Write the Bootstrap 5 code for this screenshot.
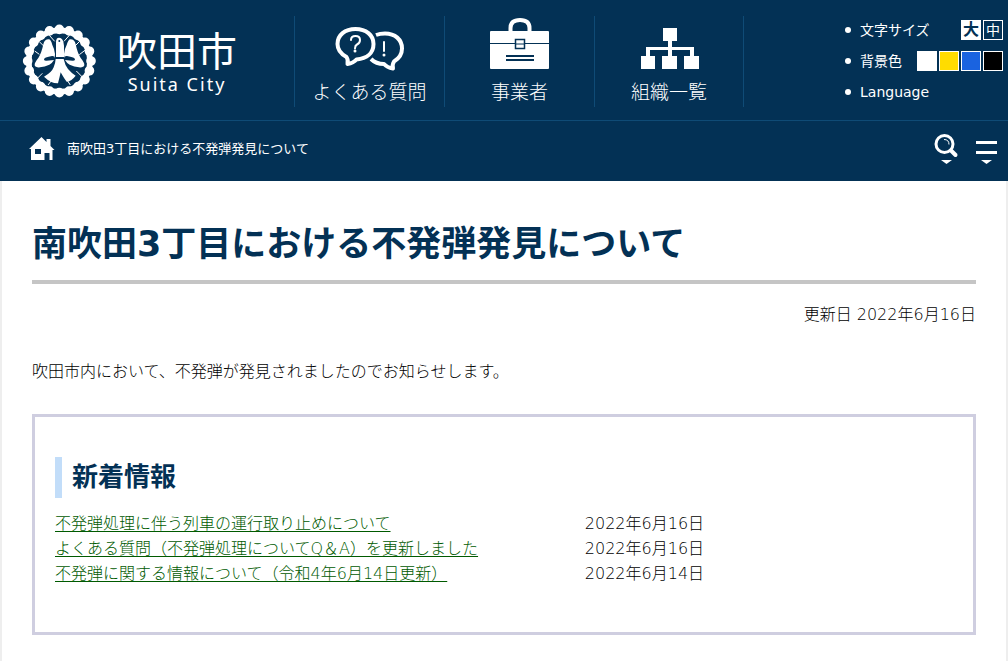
<!DOCTYPE html>
<html lang="ja">
<head>
<meta charset="utf-8">
<meta name="viewport" content="width=device-width, initial-scale=1">
<title>南吹田3丁目における不発弾発見について | 吹田市</title>
<link href="https://cdn.jsdelivr.net/npm/bootstrap@5.3.0/dist/css/bootstrap.min.css" rel="stylesheet">
<style>
  :root { --navy: #033155; --navy-line: #0f4b76; }
  body { font-family: "DejaVu Sans", "Noto Sans CJK JP", sans-serif; font-size: 16px; line-height: 25px; font-weight: 300; color: #000; background: #eee; }
  .site-head { background: var(--navy); color: #fff; font-weight: 400; }
  .site-head a { color: #fff; text-decoration: none; }
  .head-top { min-height: 121px; border-bottom: 1px solid var(--navy-line); }
  .brand { flex: 0 0 294px; padding: 16px 0 0 15px; }
  .brand-ja { font-size: 40px; line-height: 50px; font-family: "Noto Sans CJK JP", sans-serif; }
  .brand-en { font-size: 18px; line-height: 20px; font-family: "Noto Sans", sans-serif; letter-spacing: 2px; }
  .main-nav { padding-top: 16px; }
  .main-nav a { width: 150px; height: 91px; border-left: 1px solid var(--navy-line); font-size: 19px; line-height: 30px; font-weight: 300; }
  .main-nav li:last-child a { border-right: 1px solid var(--navy-line); }
  .tools { width: 163px; padding: 20px 5px 0 0; font-size: 14px; line-height: 20px; }
  .tools li { display: flex; gap: 2px; margin-bottom: 11px; }
  .tools li::before { content: ""; width: 6px; height: 6px; margin: 7px 7px 0 0; border-radius: 50%; background: #fff; }
  .tools button { width: 20px; height: 20px; padding: 0; border: 1px solid #fff; font-size: 14px; line-height: 18px; color: #fff; background: transparent; }
  .tools .size-lg { background: #fff; color: var(--navy); font-weight: 700; font-size: 16px; }
  .tools .bg-w { background: #fff; }
  .tools .bg-y { background: #ffdc00; }
  .tools .bg-b { background: #1a63e0; }
  .tools .bg-k { background: #000; }
  .crumbs { min-height: 60px; padding: 0 11px 5px 29px; font-size: 13px; }
  .icon-btn { border: 0; padding: 0; background: transparent; color: #fff; }
  .page { margin: 0 2px; padding: 38px 30px 27px; background: #fff; }
  h1 { font-size: 35px; line-height: 50px; font-weight: 700; color: var(--navy); padding-bottom: 11px; margin-bottom: 18px; border-bottom: 4px solid #c5c5c5; }
  .updated { margin-bottom: 32px; }
  .intro { margin-bottom: 30px; }
  .news { border: 3px solid #cfcee0; padding: 40px 20px 46px; }
  h2 { font-size: 26px; line-height: 41px; font-weight: 700; color: var(--navy); border-left: 7px solid #c2ddf9; padding-left: 10px; margin-bottom: 13px; }
  .news-table { width: 100%; }
  .news-table td { padding: 0; }
  .news-table td:first-child { width: 59%; }
  .news-table a { color: #005a00; text-underline-offset: 2px; }
</style>
</head>
<body>
<header class="site-head">
  <div class="head-top d-flex flex-wrap">
    <a class="brand d-flex" href="#">
      <svg width="90" height="90" viewBox="0 0 270 270" aria-hidden="true">
        <g fill="none" stroke="#fff">
          <circle cx="133" cy="135" r="95" stroke-width="29" stroke-linecap="round" pathLength="20" stroke-dasharray="0 1"/>
          <circle cx="133" cy="135" r="92" stroke-width="17"/>
          <path stroke-width="3" d="M72 76l16 16M59 105l14 10M194 76l-20 20M211 102l-18 14M99 207l14-18M62 192l20-20M166 207l-12-18M206 187l-22-22M103 58l16 18M163 58l-16 18"/>
        </g>
        <g fill="#fff">
          <path d="M123 78q0-13 9-13t13 12l2 12v34h-24z"/>
          <path d="M101 70q-13 0-16 15-5 25-15 41-12 14-11 22 2 7 16 6 14-1 28-8 9-5 14-14l-22 2q-9 1-8-4 1-6 14-8l10-2q8-1 8 6l1-12q-1-14-8-27Q108 70 101 70z"/>
          <path d="M166 70q13 0 16 15 5 25 15 41 12 14 11 22-2 7-16 6-14-1-28-8-9-5-14-14l22 2q9 1 8-4-1-6-14-8l-10-2q-8-1-8 6l-1-12q1-14 8-27Q160 70 166 70z"/>
          <path d="M122 129h24q4 19 13 30 10 12 23 20-12 16-27 18-7-8-18-28-3 14-8 33-20 1-42-20 23-12 29-28 5-11 6-25z"/>
        </g>
        <circle cx="133" cy="75" r="3" fill="#033155"/>
      </svg>
      <span class="d-flex flex-column align-items-center ms-2 pt-2 ps-1">
        <span class="brand-ja">吹田市</span>
        <span class="brand-en">Suita City</span>
      </span>
    </a>
    <nav class="main-nav" aria-label="メイン">
      <ul class="list-unstyled d-flex mb-0">
        <li><a class="d-flex flex-column align-items-center" href="#">
          <svg width="70" height="61" viewBox="0 0 70 61" fill="none" stroke="#fff" stroke-width="4" stroke-linejoin="round" aria-hidden="true">
            <path d="M20.500 13C10 13 2.500 19 2.500 28c0 6 3.500 10 9 13q2 3 1 7 6-1 9-4.500C32 42.500 38.500 37 38.500 28S31 13 20.500 13z"/>
            <path d="M41 19q4-1.500 9-1.500c10 0 17 6 17 15 0 6-3 10-8 13q-2 3-1 7-6-1-9-4.500-8 0-13-5"/>
            <path stroke-width="2" stroke-linecap="round" d="M16 24q0-4 4.500-4t4.500 4q0 3-3 4.500-2 1-2 4M49 26v9"/>
            <circle cx="20" cy="35" r="1.500" fill="#fff" stroke="none"/><circle cx="49" cy="39" r="1.500" fill="#fff" stroke="none"/>
          </svg>よくある質問</a></li>
        <li><a class="d-flex flex-column align-items-center" href="#">
          <svg width="60" height="61" viewBox="0 0 60 61" fill="none" aria-hidden="true">
            <path stroke="#fff" stroke-width="4" d="M20.500 17v-5q0-8 9.500-8t9.500 8v5"/>
            <rect x="0" y="15" width="59" height="38" rx="1" fill="#fff"/>
            <path stroke="#033155" d="M0 27.500h25M35 27.500h25M25 28h10"/>
            <path stroke="#033155" stroke-width="1.500" d="M25.500 23.500h9v9h-9z"/>
            <path stroke="#033155" stroke-width="2" d="M16 40h28M16 44h28"/>
          </svg>事業者</a></li>
        <li><a class="d-flex flex-column align-items-center" href="#">
          <svg width="60" height="61" viewBox="0 0 60 61" fill="#fff" aria-hidden="true">
            <path d="M24 12h14v13h-5v6h22v9h5v13H45V40h6v-6H33v6h5v13H23V40h6v-6H11v6h5v13H2V40h5v-9h22v-6h-5z"/>
          </svg>組織一覧</a></li>
      </ul>
    </nav>
    <ul class="tools list-unstyled ms-auto mb-0">
      <li>文字サイズ<button class="size-lg ms-auto" type="button">大</button><button type="button">中</button></li>
      <li>背景色<button class="bg-w ms-auto" type="button" aria-label="白"></button><button class="bg-y" type="button" aria-label="黄"></button><button class="bg-b" type="button" aria-label="青"></button><button class="bg-k" type="button" aria-label="黒"></button></li>
      <li><a href="#">Language</a></li>
    </ul>
  </div>
  <div class="crumbs d-flex align-items-center">
    <a href="#" aria-label="ホーム" class="d-flex">
      <svg width="26" height="24" viewBox="0 0 26 24" aria-hidden="true">
        <path fill="#fff" d="M0 12L12.500 0l5 5V2h4v7l4 4h-2v10h-3v-7h-5v7H2V12z"/>
        <path fill="#033155" d="M6 12h6v5H6z"/>
      </svg>
    </a>
    <span class="ms-2 ps-1">南吹田3丁目における不発弾発見について</span>
    <div class="ms-auto d-flex gap-3">
      <button class="icon-btn d-flex" type="button" aria-label="検索">
        <svg width="25" height="30" viewBox="0 0 25 30" fill="none" stroke="#fff" aria-hidden="true">
          <circle cx="10.500" cy="10" r="8.500" stroke-width="3"/><path stroke-width="1" d="M10 5.500q5 0 5 5"/>
          <path stroke-width="4" stroke-linecap="round" d="M17 16.500l4.500 4.500"/><path fill="#fff" stroke="none" d="M7 26h11l-5.500 4z"/>
        </svg>
      </button>
      <button class="icon-btn d-flex" type="button" aria-label="メニュー">
        <svg width="22" height="30" viewBox="0 0 22 30" fill="#fff" aria-hidden="true"><path d="M1 7h21v3H1zM1 17h21v3H1zM6 26h11l-5.500 4z"/></svg>
      </button>
    </div>
  </div>
</header>
<main class="page">
  <h1>南吹田3丁目における不発弾発見について</h1>
  <p class="updated text-end">更新日 2022年6月16日</p>
  <p class="intro">吹田市内において、不発弾が発見されましたのでお知らせします。</p>
  <section class="news">
    <h2>新着情報</h2>
    <table class="news-table">
      <tbody>
        <tr><td><a href="#">不発弾処理に伴う列車の運行取り止めについて</a></td><td>2022年6月16日</td></tr>
        <tr><td><a href="#">よくある質問（不発弾処理についてQ＆A）を更新しました</a></td><td>2022年6月16日</td></tr>
        <tr><td><a href="#">不発弾に関する情報について（令和4年6月14日更新）</a></td><td>2022年6月14日</td></tr>
      </tbody>
    </table>
  </section>
</main>
<script src="https://cdn.jsdelivr.net/npm/bootstrap@5.3.0/dist/js/bootstrap.bundle.min.js"></script>
</body>
</html>
